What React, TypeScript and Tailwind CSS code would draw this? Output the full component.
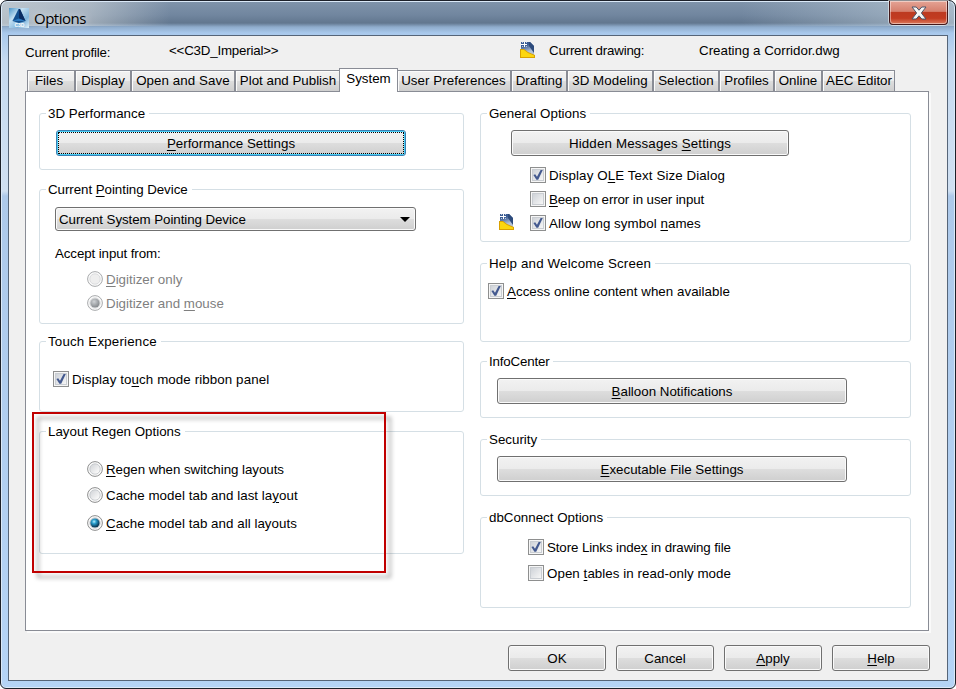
import type { ReactNode } from "react";
import clsx from "clsx";

const TABS = [
  { name: "Files", size: "w-[48px] border-x pr-[4px]" },
  { name: "Display", size: "w-[56px] border-x" },
  { name: "Open and Save", size: "w-[104px] border-x tracking-[0.08px]" },
  { name: "Plot and Publish", size: "w-[104px] border-l pl-[1px]" },
  { name: "System", size: "w-[59px] border-x" },
  { name: "User Preferences", size: "w-[113px] border-r pr-[1px] tracking-[0.06px]" },
  { name: "Drafting", size: "w-[56px] border-x" },
  { name: "3D Modeling", size: "w-[86px] border-x tracking-[0.08px]" },
  { name: "Selection", size: "w-[66px] border-x tracking-[0.1px]" },
  { name: "Profiles", size: "w-[55px] border-x" },
  { name: "Online", size: "w-[48px] border-x" },
  { name: "AEC Editor", size: "w-[73px] border-x pl-[1px]" },
];

const FACE =
  "bg-[linear-gradient(#f2f2f2_0%,#ebebeb_48%,#dddddd_52%,#cfcfcf_100%)]";

// "&" marks the keyboard accelerator, as in a Windows resource file
function Text({ children, className }: { children: string; className?: string }) {
  const at = children.indexOf("&");
  if (at < 0) {
    return <span className={clsx("whitespace-pre", className)}>{children}</span>;
  }
  return (
    <span className={clsx("whitespace-pre", className)}>
      {children.slice(0, at)}
      <span className="underline decoration-1 underline-offset-2">
        {children[at + 1]}
      </span>
      {children.slice(at + 2)}
    </span>
  );
}

function Button({
  label,
  className,
  focused,
}: {
  label: string;
  className: string;
  focused?: boolean;
}) {
  return (
    <button
      className={clsx(
        "flex h-[26px] shrink-0 items-center justify-center rounded-[3px] border",
        FACE,
        focused
          ? "border-[#3c7fb1] shadow-[inset_0_0_0_1px_#48d0f8]"
          : "border-[#707070] shadow-[inset_0_0_0_1px_#fafafa]",
        className
      )}
    >
      {focused ? (
        <span className="mx-px flex h-[22px] w-full items-center justify-center border border-dotted border-black">
          <Text className="pt-[2px]">{label}</Text>
        </span>
      ) : (
        <Text className="pt-[2px]">{label}</Text>
      )}
    </button>
  );
}

function Group({
  title,
  className,
  titleClass,
  children,
}: {
  title: string;
  className: string;
  titleClass?: string;
  children: ReactNode;
}) {
  return (
    <section
      className={clsx("flex flex-col rounded-[3px] border border-[#d5dfe5]", className)}
    >
      <h2
        className={clsx(
          "-mt-[9px] ml-[6px] h-4 shrink-0 self-start bg-white pr-[4px] pl-[2px] leading-[18px]",
          titleClass
        )}
      >
        <Text>{title}</Text>
      </h2>
      {children}
    </section>
  );
}

function Check({
  label,
  checked,
  className,
}: {
  label: string;
  checked?: boolean;
  className?: string;
}) {
  return (
    <label className={clsx("flex h-4 items-center gap-[3px] leading-4", className)}>
      <svg width="16" height="16" viewBox="0 0 16 16" className="shrink-0">
        <defs>
          <linearGradient id="box" x1="0" y1="0" x2="1" y2="1">
            <stop offset="0" stopColor="#cdd1d7" />
            <stop offset="1" stopColor="#f8f8f8" />
          </linearGradient>
        </defs>
        <rect x="0.5" y="0.5" width="15" height="15" fill="#f6f6f6" stroke="#8e8f8f" />
        <rect x="2.5" y="2.5" width="11" height="11" fill="url(#box)" stroke="#c9cdd2" />
        {checked && (
          <path d="M3.4 8 L5.2 7.2 L7 9.8 L10.6 3 L12.8 3 L8.2 12.8 L6.4 12.8 Z" fill="#43598f" />
        )}
      </svg>
      <Text className="pt-[2px]">{label}</Text>
    </label>
  );
}

function Radio({
  label,
  selected,
  disabled,
  className,
}: {
  label: string;
  selected?: boolean;
  disabled?: boolean;
  className?: string;
}) {
  return (
    <label
      className={clsx(
        "flex h-4 items-center gap-[3px] leading-4",
        disabled && "text-[#7f7f7f]",
        className
      )}
    >
      <svg width="16" height="16" viewBox="0 0 16 16" className="shrink-0">
        <defs>
          <linearGradient id="dish" x1="0" y1="0" x2="1" y2="1">
            <stop offset="0" stopColor="#ced1d5" />
            <stop offset="0.8" stopColor="#f8f8f8" />
          </linearGradient>
          <radialGradient id="dot" cx="0.4" cy="0.35" r="0.65">
            <stop offset="0" stopColor="#b8eefc" />
            <stop offset="0.35" stopColor="#2a9fce" />
            <stop offset="0.9" stopColor="#0b3a58" />
          </radialGradient>
          <radialGradient id="dotOff" cx="0.4" cy="0.35" r="0.65">
            <stop offset="0" stopColor="#cfd2d5" />
            <stop offset="1" stopColor="#85898d" />
          </radialGradient>
        </defs>
        <circle cx="8" cy="8" r="7.4" fill="#fafafa" stroke={disabled ? "#a9abad" : "#8e8f8f"} />
        <circle
          cx="8"
          cy="8"
          r="5.2"
          fill={disabled ? "#eeeeee" : "url(#dish)"}
          stroke={disabled ? "#d5d7d9" : "#bfc3c7"}
          strokeWidth="0.8"
        />
        {selected && <circle cx="8" cy="8" r="4.6" fill={disabled ? "url(#dotOff)" : "url(#dot)"} />}
      </svg>
      <Text className="pt-[2px]">{label}</Text>
    </label>
  );
}

function DrawingIcon({ className }: { className?: string }) {
  return (
    <svg width="16" height="17" viewBox="0 0 16 17" className={clsx("shrink-0", className)}>
      <defs>
        <linearGradient id="sheet" x1="0" y1="0" x2="0.3" y2="1">
          <stop offset="0.3" stopColor="#3a5c94" />
          <stop offset="0.8" stopColor="#b4c2d6" />
        </linearGradient>
      </defs>
      <path d="M1 1 H10 L14 5 V15 H1 Z" fill="url(#sheet)" />
      <path d="M9 1 H10 L14 5 V12 L9 5 Z" fill="#2d4b7c" />
      <path d="M4 1 h1 v2 h2 v1 h-2 v2 h-1 v-2 h-3 v-1 h3 Z" fill="#fff" />
      <path d="M2 1 h1 v1 h-1 Z M6 1 h1 v1 h-1 Z M2 5 h1 v1 h-1 Z M6 5 h1 v1 h-1 Z" fill="#b9c7dc" />
      <path d="M0 8 H4 L8 11 L15 14 V17 H0 Z" fill="#d9a100" />
      <path d="M1 9 H4 L8 12 L14 14.5 V16 H1 Z" fill="#fcd60f" />
    </svg>
  );
}

function TitleBar() {
  return (
    <header className="flex h-[34px] shrink-0 justify-between pl-[8px]">
      <div className="flex items-start">
        <svg width="20" height="20" viewBox="0 0 20 20" className="mt-[7px]">
          <defs>
            <linearGradient id="tile" x1="0" y1="0" x2="1" y2="1">
              <stop offset="0" stopColor="#4b95c8" />
              <stop offset="0.35" stopColor="#c4e0f2" />
              <stop offset="0.7" stopColor="#7fb4dc" />
              <stop offset="1" stopColor="#e4f2fa" />
            </linearGradient>
          </defs>
          <rect width="20" height="20" fill="url(#tile)" />
          <path d="M9.5 1 L11 1 L16.5 13 L10 15 L3.5 13 Z" fill="#14508f" />
          <path d="M10 1 H11 L16.5 13 L10 11 Z" fill="#0a2c62" />
          <path d="M3.5 13 L10 10.5 L16.5 13 L10 13 Z" fill="#2c7ac0" />
          <text x="5.4" y="18.6" fontSize="5" fontWeight="bold" fill="#fff">
            C3D
          </text>
        </svg>
        <h1 className="mt-[7px] ml-[5px] font-['Open_Sans','Noto_Sans',sans-serif] text-[15px] leading-5 tracking-[-0.5px] text-black [text-shadow:0_0_8px_rgba(255,255,255,0.9)]">
          Options
        </h1>
      </div>
      <button className="mr-[7px] flex h-[24px] w-[59px] items-center justify-center rounded-b-[4px] border border-t-0 border-[#43181a] bg-[linear-gradient(#e5a495_0%,#d5806e_45%,#bd3a21_50%,#c23b21_75%,#db7b5e_100%)] shadow-[inset_0_0_0_1px_rgba(255,255,255,0.45),0_0_0_1px_rgba(255,255,255,0.5)]">
        <svg width="16" height="14" viewBox="0 0 16 14">
          <path
            d="M1 1 H5.2 L8 4.2 L10.8 1 H15 L10.4 7 L15 13 H10.8 L8 9.8 L5.2 13 H1 L5.6 7 Z"
            fill="#f6f6f6"
            stroke="#4c5568"
            strokeLinejoin="round"
          />
        </svg>
      </button>
    </header>
  );
}

export default function App() {
  return (
    <div className="h-[689px] w-[956px] overflow-hidden bg-white font-['Liberation_Sans',Arial,sans-serif] text-[13.33px] text-black">
      <div className="flex h-full flex-col rounded-t-[7px] rounded-b-[6px] border border-[#1c2029] bg-[linear-gradient(90deg,rgba(215,220,222,0.7)_0px,rgba(215,220,222,0.5)_90px,transparent_170px,transparent_740px,rgba(200,215,225,0.6)_955px),linear-gradient(#8094ab_0px,#71869f_14px,#62778f_22px,#8faccc_26px,#a9c9ec_32px,#c6daf0_60px,#d0e0f2_190px,#adc9ea_195px,#b5d4f6_100%)] bg-[length:100%_25px,100%_100%] bg-no-repeat shadow-[inset_0_0_0_1px_#dbe9f8]">
        <TitleBar />
        <main className="mx-[7px] mb-[7px] flex grow flex-col border border-[#566578] bg-[#f0f0f0] px-[16px]">
          <div className="flex h-[31px] shrink-0 items-start leading-4">
            <span className="mt-[9px] w-[144px] tracking-[-0.18px]">Current profile:</span>
            <span className="mt-[7px] w-[351px] tracking-[-0.2px]">&lt;&lt;C3D_Imperial&gt;&gt;</span>
            <DrawingIcon className="mt-[5px]" />
            <span className="mt-[7px] ml-[13px] w-[150px] tracking-[-0.2px]">Current drawing:</span>
            <span className="mt-[7px]">Creating a Corridor.dwg</span>
          </div>

          <nav className="flex h-[24px] shrink-0 items-end pl-[2px]">
            {TABS.map(({ name, size }) =>
              name === "System" ? (
                <div
                  key={name}
                  className={clsx(
                    "z-10 -mb-px flex h-[24px] shrink-0 items-center justify-center border-t border-[#898c95] bg-white pb-[3px]",
                    size
                  )}
                >
                  <Text>{name}</Text>
                </div>
              ) : (
                <div
                  key={name}
                  className={clsx(
                    "flex h-[21px] shrink-0 items-center justify-center border-t border-[#898c95] shadow-[inset_1px_1px_0_#fbfbfb]",
                    FACE,
                    size
                  )}
                >
                  <Text>{name}</Text>
                </div>
              )
            )}
          </nav>

          <div className="flex h-[540px] w-[904px] shrink-0 gap-[16px] border border-[#898c95] bg-white pt-[21px] pl-[13px] shadow-[2px_2px_0_#fafafa]">
            <div className="w-[425px]">
              <Group title="3D Performance" className="h-[57px]">
                <Button label="&Performance Settings" className="mt-[9px] ml-4 w-[350px]" focused />
              </Group>

              <Group
                title="Current &Pointing Device"
                titleClass="tracking-[-0.05px]"
                className="mt-[19px] h-[135px]"
              >
                <div
                  className={clsx(
                    "mt-[10px] ml-[15px] flex h-6 w-[361px] shrink-0 items-center justify-between rounded-[3px] border border-[#707070] pr-[5px] pl-[3px] shadow-[inset_0_0_0_1px_#fafafa]",
                    FACE
                  )}
                >
                  <Text className="pt-[2px] tracking-[-0.07px]">Current System Pointing Device</Text>
                  <svg width="10" height="5" viewBox="0 0 10 5">
                    <path d="M0 0 H10 L5 5 Z" />
                  </svg>
                </div>
                <p className="mt-[15px] ml-[15px] leading-4 tracking-[-0.1px]">Accept input from:</p>
                <Radio label="&Digitizer only" className="mt-[9px] ml-[47px]" disabled />
                <Radio label="Digitizer and &mouse" className="mt-2 ml-[47px]" disabled selected />
              </Group>

              <Group
                title="Touch Experience"
                titleClass="tracking-[0.18px]"
                className="mt-[17px] h-[71px]"
              >
                <Check
                  label="Display to&uch mode ribbon panel"
                  className="mt-[22px] ml-[13px] tracking-[0.1px]"
                  checked
                />
              </Group>

              <div className="relative mt-[19px]">
                <Group title="Layout Regen Options" className="h-[123px]">
                  <Radio
                    label="&Regen when switching layouts"
                    className="mt-[22px] ml-[47px] tracking-[-0.05px]"
                  />
                  <Radio
                    label="Cache model tab and last la&yout"
                    className="mt-[10px] ml-[47px] tracking-[0.04px]"
                  />
                  <Radio
                    label="&Cache model tab and all layouts"
                    className="mt-3 ml-[47px] tracking-[0.04px]"
                    selected
                  />
                </Group>
                {/* callout frame laid over the group */}
                <div className="absolute -top-[19px] -left-[7px] h-[161px] w-[354px] border-2 border-[#c00000] drop-shadow-[5px_5px_2px_rgba(0,0,0,0.35)]" />
              </div>
            </div>

            <div className="w-[431px]">
              <Group title="General Options" className="h-[129px]">
                <Button
                  label="Hidden Messages &Settings"
                  className="mt-[9px] ml-[30px] w-[278px] tracking-[0.15px]"
                />
                <Check
                  label="Display O&LE Text Size Dialog"
                  className="mt-[11px] ml-[49px] tracking-[0.1px]"
                  checked
                />
                <Check
                  label="&Beep on error in user input"
                  className="mt-2 ml-[49px] tracking-[-0.1px]"
                />
                <div className="mt-[6px] ml-[18px] flex">
                  <DrawingIcon />
                  <Check
                    label="Allow long symbol &names"
                    className="mt-[2px] ml-[15px] tracking-[0.06px]"
                    checked
                  />
                </div>
              </Group>

              <Group
                title="Help and Welcome Screen"
                titleClass="tracking-[0.17px]"
                className="mt-[21px] h-[79px]"
              >
                <Check
                  label="&Access online content when available"
                  className="mt-3 ml-[7px] tracking-[0.04px]"
                  checked
                />
              </Group>

              <Group title="InfoCenter" titleClass="tracking-[-0.18px]" className="mt-[19px] h-[57px]">
                <Button label="&Balloon Notifications" className="mt-[9px] ml-4 w-[350px]" />
              </Group>

              <Group title="Security" className="mt-[21px] h-[57px]">
                <Button label="&Executable File Settings" className="mt-[9px] ml-4 w-[350px]" />
              </Group>

              <Group title="dbConnect Options" className="mt-[21px] h-[91px]">
                <Check
                  label="Store Links inde&x in drawing file"
                  className="mt-[14px] ml-[47px] tracking-[-0.11px]"
                  checked
                />
                <Check
                  label="Open &tables in read-only mode"
                  className="mt-[10px] ml-[47px] tracking-[0.06px]"
                />
              </Group>
            </div>
          </div>

          <footer className="mt-[14px] flex gap-[10px] pl-[483px]">
            <Button label="OK" className="w-[98px]" />
            <Button label="Cancel" className="w-[98px]" />
            <Button label="&Apply" className="w-[98px]" />
            <Button label="&Help" className="w-[98px]" />
          </footer>
        </main>
      </div>
    </div>
  );
}
